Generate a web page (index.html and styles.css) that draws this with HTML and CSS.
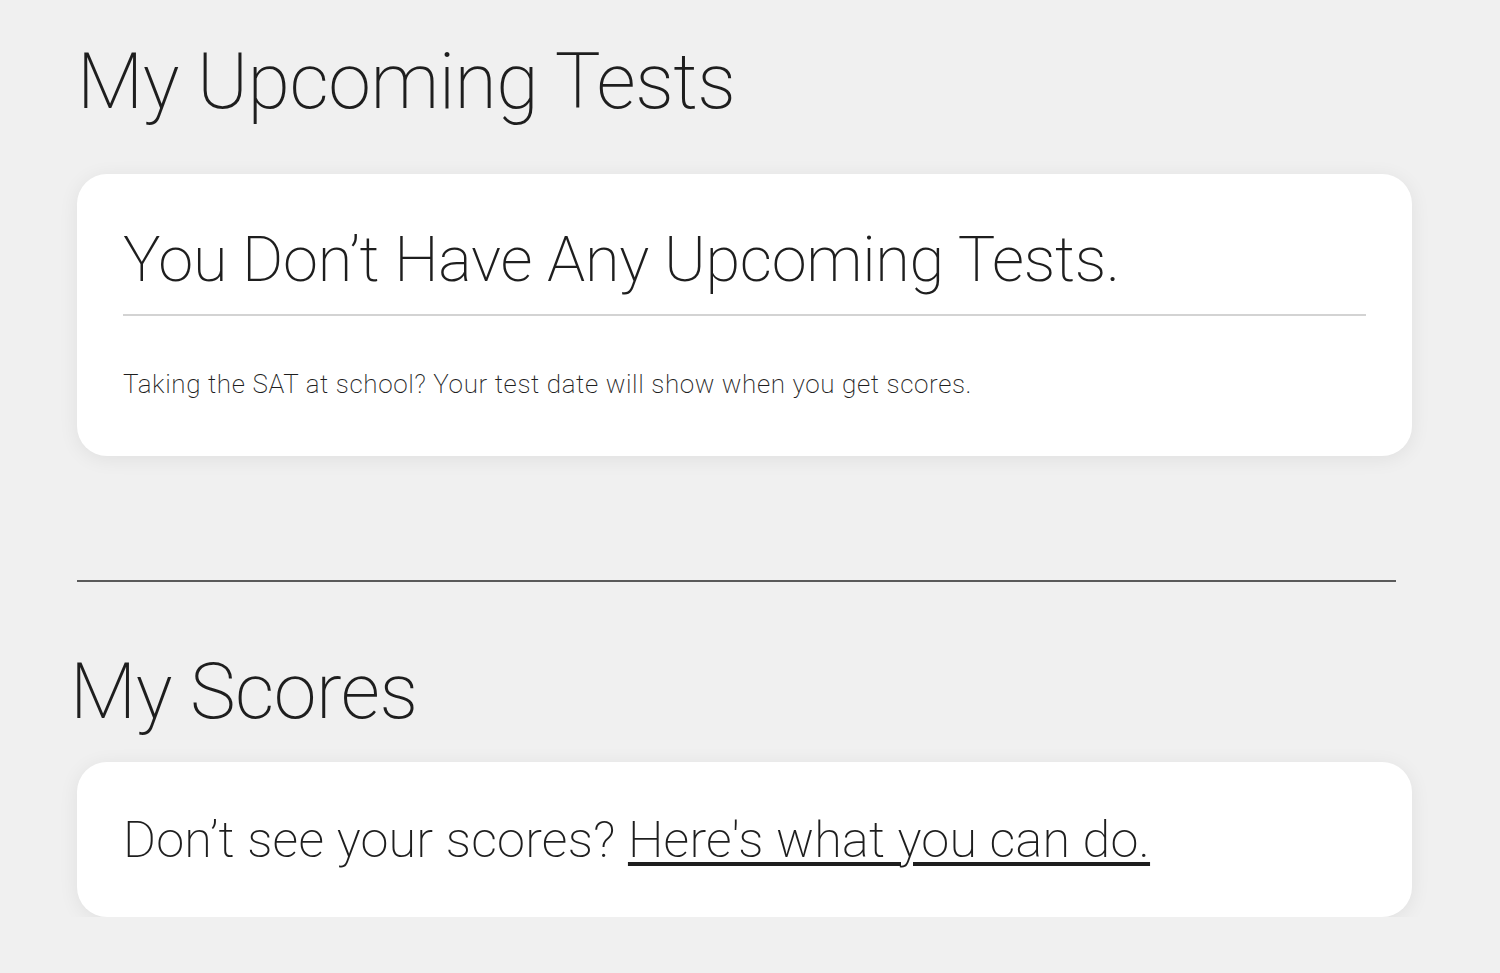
FILE: index.html
```html
<!DOCTYPE html>
<html lang="en">
<head>
<meta charset="utf-8">
<title>My Upcoming Tests</title>
<link rel="stylesheet" href="styles.css">
</head>
<body>
<main class="page">
  <section class="section">
    <h1 class="section-title">My Upcoming Tests</h1>
    <div class="card card-tests">
      <h2 class="card-title">You Don’t Have Any Upcoming Tests.</h2>
      <p class="card-note">Taking the SAT at school? Your test date will show when you get scores.</p>
    </div>
  </section>
  <hr class="rule">
  <section class="section">
    <h1 class="section-title section-title-scores">My Scores</h1>
    <div class="card card-scores">
      <p class="scores-text">Don’t see your scores? <a class="scores-link" href="#">Here's what you can do.</a></p>
    </div>
  </section>
</main>
</body>
</html>
```

FILE: styles.css
```css
html, body {
  margin: 0;
  padding: 0;
}

body {
  background: #f0f0f0;
  color: #1e1e1e;
  font-family: Roboto, "Noto Sans", "Liberation Sans", sans-serif;
  font-weight: 200;
}

.page {
  width: 1335px;
  padding: 0 0 0 77px;
}

.section-title {
  margin: 36px 0 0 0;
  font-size: 77px;
  font-weight: 200;
  line-height: 1.2;
  letter-spacing: -0.5px;
}

.card {
  background: #ffffff;
  border-radius: 30px;
  box-shadow: 0 3px 20px rgba(0, 0, 0, 0.07);
}

.card-tests {
  margin-top: 46px;
  padding: 48px 46px 56px 46px;
}

.card-title {
  margin: 0;
  padding-bottom: 16px;
  border-bottom: 2px solid #d3d3d3;
  font-size: 63px;
  font-weight: 200;
  line-height: 1.2;
  letter-spacing: -0.3px;
}

.card-note {
  margin: 53px 0 0 0;
  font-size: 26px;
  line-height: 1.2;
  letter-spacing: 0.6px;
}

.rule {
  width: 1319px;
  margin: 124px 0 0 0;
  border: 0;
  border-top: 2px solid #5a5a5a;
  height: 0;
}

.section-title-scores {
  margin: 64px 0 0 -7px;
}

.card-scores {
  margin-top: 23px;
  padding: 45px 46px 45px 46px;
}

.scores-text {
  margin: 0;
  font-size: 50.3px;
  line-height: 1.3;
  letter-spacing: 0.22px;
}

.scores-link {
  color: #1e1e1e;
  text-decoration: underline;
  text-decoration-thickness: 4px;
  text-underline-offset: 5px;
}
```
